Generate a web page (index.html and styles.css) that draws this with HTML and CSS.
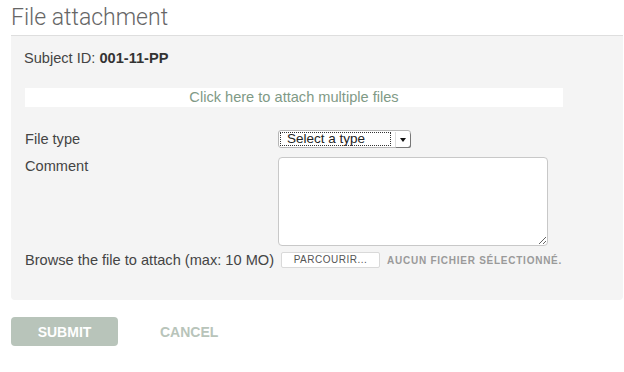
FILE: index.html
```html
<!DOCTYPE html>
<html lang="en">
<head>
    <meta charset="UTF-8">
    <meta name="viewport" content="width=device-width, initial-scale=1.0">
    <title>File attachment</title>
    <link rel="stylesheet" href="styles.css">
</head>
<body>

    <div class="page">
        <h1>File attachment</h1>

        <form class="panel" id="attachForm">
            <p class="subject">Subject ID: <strong>001-11-PP</strong></p>

            <div class="multi-attach">Click here to attach multiple files</div>

            <div class="form-row row-type">
                <label for="file_type">File type</label>
                <div class="select-box" id="file_type">
                    <span class="select-text">Select a type</span>
                    <span class="select-arrow"></span>
                </div>
            </div>

            <div class="form-row row-comment">
                <label for="comment">Comment</label>
                <textarea id="comment" name="comment"></textarea>
            </div>

            <div class="form-row row-file">
                <label for="file">Browse the file to attach (max: 10 MO)</label>
                <div class="file-field">
                    <span class="file-button">Parcourir...</span>
                    <span class="file-name">Aucun fichier sélectionné.</span>
                </div>
            </div>
        </form>

        <div class="actions">
            <button type="submit" form="attachForm" class="btn-submit">Submit</button>
            <a href="#" class="btn-cancel">Cancel</a>
        </div>
    </div>

</body>
</html>
```

FILE: styles.css
```css
body {
    margin: 0;
    font-family: 'Liberation Sans', Arial, sans-serif;
    font-size: 14.6px;
    color: #444;
    background: #fff;
}

.page {
    margin-left: 11px;
    width: 612px;
}

h1 {
    font-family: 'Roboto', 'Liberation Sans', sans-serif;
    font-weight: 300;
    font-size: 23px;
    line-height: 28px;
    color: #666;
    margin: 0;
    padding: 4px 0 3px 0;
    border-bottom: 1px solid #dedede;
}

.panel {
    background: #f4f4f4;
    padding: 14px 0 32px 13px;
    border-radius: 0 0 4px 4px;
}

.subject {
    margin: 0;
    line-height: 16px;
    color: #444;
}

.subject strong {
    color: #333;
}

.multi-attach {
    margin: 22px 0 0 1px;
    width: 538px;
    height: 19px;
    line-height: 19px;
    background: #fff;
    text-align: center;
    color: #7f9a86;
    cursor: pointer;
}

.form-row {
    display: grid;
    grid-template-columns: 253px auto;
    margin-left: 1px;
}

.form-row label {
    line-height: 16px;
    color: #444;
}

.row-type {
    margin-top: 23px;
    align-items: center;
}

.row-comment {
    margin-top: 9px;
    align-items: start;
}

.row-comment label {
    margin-top: 1px;
}

.row-file {
    margin-top: 6px;
    align-items: center;
}

.select-box {
    display: flex;
    align-items: center;
    width: 130px;
    height: 16px;
    border: 1px solid #b5b5b5;
    border-radius: 3px;
    background: #fff;
    padding-left: 1px;
    font-size: 13.5px;
}

.select-text {
    flex: 1;
    height: 14px;
    line-height: 14px;
    outline: 1px dotted #333;
    outline-offset: -1px;
    padding-left: 7px;
    color: #222;
    margin-right: 4px;
}

.select-arrow {
    width: 14px;
    height: 15px;
    border-left: 1px solid #ddd;
    box-shadow: 1px 1px 0 #777;
    border-radius: 0 2px 2px 0;
    position: relative;
}

.select-arrow::after {
    content: '';
    position: absolute;
    left: 4px;
    top: 6px;
    border-left: 3px solid transparent;
    border-right: 3px solid transparent;
    border-top: 4px solid #111;
}

textarea {
    width: 270px;
    height: 89px;
    box-sizing: border-box;
    border: 1px solid #c8c8c8;
    border-radius: 4px;
    background: #fff;
    margin: 0;
    font-family: inherit;
}

.file-field {
    display: flex;
    align-items: center;
    gap: 7px;
    margin-left: 3px;
}

.file-button {
    width: 97px;
    height: 14px;
    line-height: 14px;
    border: 1px solid #d9d9d9;
    border-radius: 2px;
    background: #fff;
    text-align: center;
    text-transform: uppercase;
    font-size: 10px;
    letter-spacing: 0.5px;
    color: #555;
}

.file-name {
    text-transform: uppercase;
    font-size: 10px;
    font-weight: bold;
    letter-spacing: 0.75px;
    color: #9a9a9a;
}

.actions {
    display: flex;
    align-items: center;
    margin-top: 17px;
}

.btn-submit {
    width: 107px;
    height: 29px;
    background: #b8c4ba;
    color: #fff;
    border: none;
    border-radius: 4px;
    font-family: inherit;
    font-size: 14px;
    font-weight: bold;
    text-transform: uppercase;
    cursor: pointer;
}

.btn-cancel {
    margin-left: 42px;
    font-size: 14px;
    color: #b8c4ba;
    font-weight: bold;
    text-transform: uppercase;
    text-decoration: none;
}
```
